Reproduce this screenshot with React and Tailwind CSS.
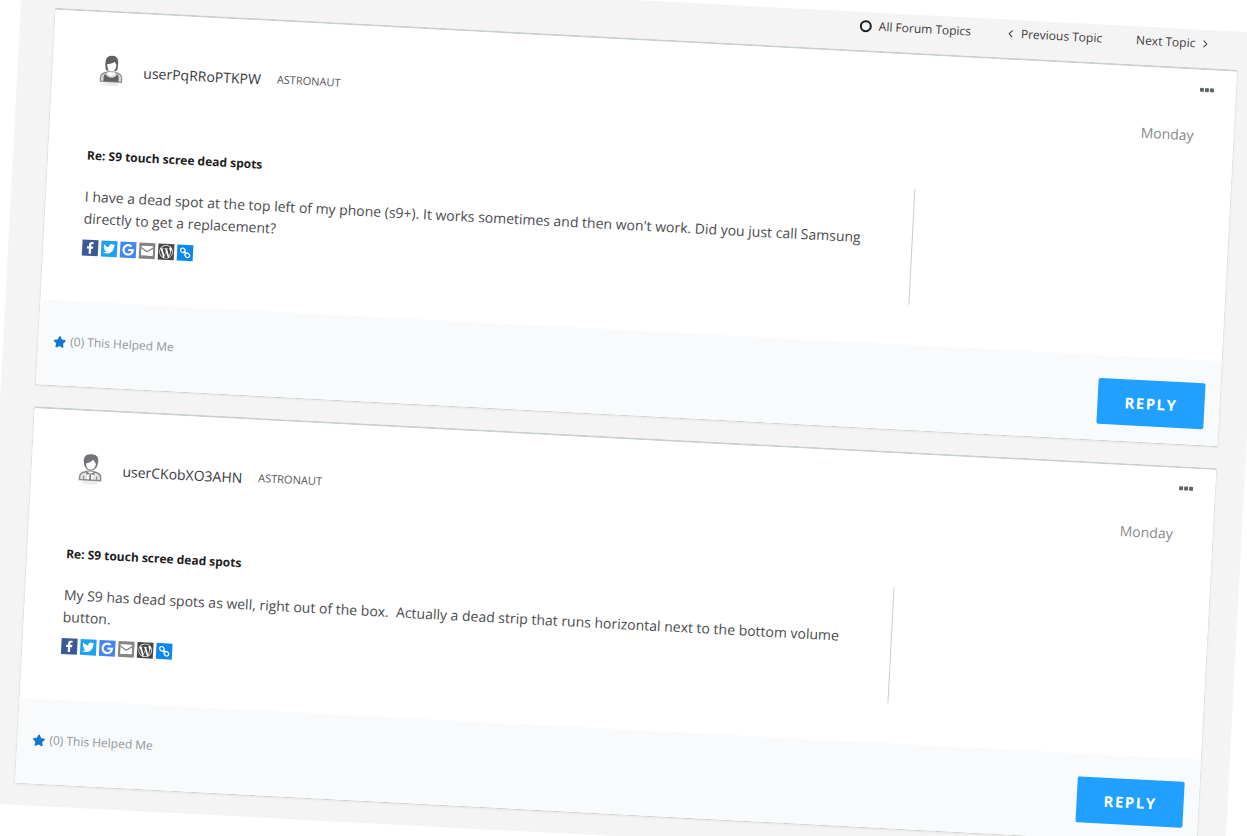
import React from 'react';
import { FaFacebookF, FaTwitter, FaGoogle, FaWordpressSimple, FaStar } from 'react-icons/fa';
import { ChevronLeft, ChevronRight } from 'lucide-react';

const posts = [
  {
    id: 1,
    user: 'userPqRRoPTKPW',
    rank: 'ASTRONAUT',
    date: 'Monday',
    avatar: 'woman',
    title: 'Re: S9 touch scree dead spots',
    body: "I have a dead spot at the top left of my phone (s9+). It works sometimes and then won't work. Did you just call Samsung directly to get a replacement?",
    kudos: 0,
  },
  {
    id: 2,
    user: 'userCKobXO3AHN',
    rank: 'ASTRONAUT',
    date: 'Monday',
    avatar: 'man',
    title: 'Re: S9 touch scree dead spots',
    body: 'My S9 has dead spots as well, right out of the box.\u00a0 Actually a dead strip that runs horizontal next to the bottom volume button.',
    kudos: 0,
  },
];

function WomanAvatar() {
  return (
    <svg width="24" height="32" viewBox="0 0 24 32" className="shrink-0" aria-hidden="true">
      <ellipse cx="12" cy="29.500" rx="8" ry="2" fill="#ececec" />
      <path d="M6 14C5 6 5.500 1 12 1s7 5 6 13c-.3 1.500-1 2-2 2H8c-1 0-1.700-.5-2-2z" fill="#606165" />
      <path d="M7.500 9.500c3 .2 5.500-.8 7-2.500.8 1.200 1.500 2 2.200 2.500 0 4-1.700 7.500-4.700 7.500s-4.500-3.500-4.500-7.500z" fill="#fff" />
      <path d="M10 16h4v4l-2 2-2-2z" fill="#fff" />
      <path d="M1.500 27c-.8-4.500.5-7.500 3.500-8.500l3.500-1.200h7l3.500 1.200c3 1 4.300 4 3.500 8.500z" fill="#d8d8d9" stroke="#8c8d90" strokeWidth="1.200" />
      <path d="M8 17.500h8c-.3 2.500-2 4-4 4s-3.700-1.500-4-4z" fill="#fff" />
      <path d="M6 19l1.500 2.500C9 22.500 10.500 23 12 23s3-.5 4.500-1.500L18 19l1.500 3v5h-15v-5z" fill="#606165" />
    </svg>
  );
}

function ManAvatar() {
  return (
    <svg width="24" height="32" viewBox="0 0 24 32" className="shrink-0" aria-hidden="true">
      <ellipse cx="12" cy="29.500" rx="8" ry="2" fill="#ececec" />
      <path d="M5 10C4 4 6 1 12 1s8 3 7 9c-.5 4.500-3.500 7.500-7 7.500S5.500 14.500 5 10z" fill="#737477" />
      <path d="M7 10.500c2.500-.5 5.500-2 7.200-4 .8 1.500 2 2.500 2.800 4-.2 3.500-2.200 6-5 6s-4.700-2.500-5-6z" fill="#fff" />
      <path d="M1.500 27c-.6-4 .5-6.500 3.500-7.500l4-1.300h6l4 1.300c3 1 4.100 3.500 3.500 7.500z" fill="#e2e2e3" stroke="#8c8d90" strokeWidth="1.500" />
      <path d="M9 18.500h6V26H9z" fill="#fff" />
      <path d="M8 18.500l4 2 4-2v3l-4-1-4 1zM11.200 20.500h1.600V27h-1.600z" fill="#737477" />
      <path d="M5.500 23v4M18.500 23v4" stroke="#8c8d90" strokeWidth="1.200" />
    </svg>
  );
}

function MailIcon() {
  return (
    <svg width="12" height="10" viewBox="0 0 12 10" aria-hidden="true">
      <rect width="12" height="10" rx="1" fill="#fff" />
      <path d="M0 2l6 4 6-4" fill="none" stroke="#848484" strokeWidth="1.300" />
    </svg>
  );
}

function ChainIcon() {
  return (
    <svg width="12" height="12" viewBox="0 0 12 12" fill="none" stroke="#fff" strokeWidth="1.200" aria-hidden="true">
      <rect x="1.200" y="1.700" width="5" height="4" rx="2" transform="rotate(45 3.700 3.700)" />
      <rect x="5.800" y="6.300" width="5" height="4" rx="2" transform="rotate(45 8.300 8.300)" />
      <path d="M4.500 4.500l3 3" />
    </svg>
  );
}

function ShareIcons() {
  const item = 'flex h-4 w-4 items-center justify-center overflow-hidden text-white';
  return (
    <div className="mt-[10px] flex gap-[3px]">
      <a href="#" aria-label="Facebook" className={`${item} bg-[#3b5998]`}><FaFacebookF size={12} /></a>
      <a href="#" aria-label="Twitter" className={`${item} bg-[#1da1f2]`}><FaTwitter size={12} /></a>
      <a href="#" aria-label="Google" className={`${item} bg-[#4285f4]`}><FaGoogle size={12} /></a>
      <a href="#" aria-label="Email" className={`${item} bg-[#848484]`}><MailIcon /></a>
      <a href="#" aria-label="WordPress" className={`${item} bg-[#464646]`}><FaWordpressSimple size={14} /></a>
      <a href="#" aria-label="Copy link" className={`${item} bg-[#0f88ee]`}><ChainIcon /></a>
    </div>
  );
}

function Post({ post }) {
  return (
    <article className="rounded-xs border border-t-2 border-[#dde1e1] border-t-[#c9d1d0] border-b-[#c9cfcf] bg-white shadow-xs">
      {/* Author and date */}
      <header className="flex h-[134px] justify-between">
        <div className="mt-10 flex h-9 items-center pl-[47px]">
          {post.avatar === 'woman' ? <WomanAvatar /> : <ManAvatar />}
          <a href="#" className="ml-5 text-[14px] text-[#38383c]">{post.user}</a>
          <span className="ml-4 text-[11px] text-[#55555a]">{post.rank}</span>
        </div>
        <div className="flex flex-col items-end pt-3">
          <button type="button" aria-label="Post options" className="mr-[22px] flex h-4 items-center gap-px">
            <span className="h-1 w-1 rounded-[1px] bg-[#5d6668]" />
            <span className="h-1 w-1 rounded-[1px] bg-[#5d6668]" />
            <span className="h-1 w-1 rounded-[1px] bg-[#5d6668]" />
          </button>
          <time className="mt-[26px] mr-10 text-[14px] leading-6 text-[#85898c]">{post.date}</time>
        </div>
      </header>

      {/* Message */}
      <div className="flex pb-10 pl-[39px]">
        <div className="flex-1 pr-5 pb-[6px]">
          <h2 className="text-[12px] leading-5 font-bold text-[#1c1c1e]">{post.title}</h2>
          <p className="mt-5 text-[14px] leading-[22px] text-[#4a4a4e]">{post.body}</p>
          <ShareIcons />
        </div>
        <div className="w-[316px] border-l border-[#c9cdce]" />
      </div>

      {/* Kudos and reply */}
      <footer className="flex h-[85px] items-start justify-between bg-[#f8fafc] pr-[15px] pl-[15px]">
        <button type="button" className="mt-[31px] flex items-center gap-1 text-[12px] leading-5 text-[#92979b]">
          <FaStar size={13} className="text-[#0f78cf]" />
          ({post.kudos}) This Helped Me
        </button>
        <button type="button" className="mt-[23px] h-[46px] w-[107px] rounded-xs bg-[#20a0ff] text-[15px] font-bold tracking-widest text-white">
          REPLY
        </button>
      </footer>
    </article>
  );
}

export default function App() {
  return (
    <div className="h-screen overflow-hidden bg-white">
      <main className="h-screen rotate-3 bg-[#f4f4f4] pr-7 pl-[34px] font-['Open_Sans',sans-serif]">
        <nav className="flex h-[38px] items-start justify-end gap-[34px] pt-[3px] pr-7 text-[12px] leading-[22px] text-[#3f363c]">
          <a href="#" className="flex items-center gap-[7px]">
            <span className="h-3 w-3 rounded-full border-2 border-[#1c1c1c]" />
            All Forum Topics
          </a>
          <a href="#" className="flex items-center gap-1">
            <ChevronLeft size={12} />
            Previous Topic
          </a>
          <a href="#" className="flex items-center gap-1">
            Next Topic
            <ChevronRight size={12} />
          </a>
        </nav>
        <div className="flex flex-col gap-[21px]">
          {posts.map((post) => (
            <Post key={post.id} post={post} />
          ))}
        </div>
      </main>
    </div>
  );
}
